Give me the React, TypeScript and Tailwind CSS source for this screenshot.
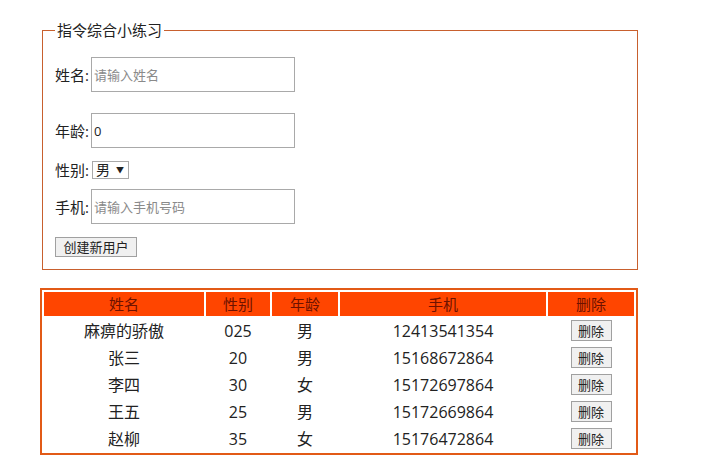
const users = [
  { name: "麻痹的骄傲", age: "025", sex: "男", phone: "12413541354" },
  { name: "张三", age: "20", sex: "男", phone: "15168672864" },
  { name: "李四", age: "30", sex: "女", phone: "15172697864" },
  { name: "王五", age: "25", sex: "男", phone: "15172669864" },
  { name: "赵柳", age: "35", sex: "女", phone: "15176472864" },
];

function Field({ label, children, className }: { label: string; children: React.ReactNode; className?: string }) {
  return (
    <div className={"flex items-center " + (className ?? "")}>
      <span className="w-[36px] text-[15px] leading-[20px] text-[#222]">{label}:</span>
      {children}
    </div>
  );
}

export default function App() {
  return (
    <div className="min-h-screen bg-white pl-[40px] pt-[20px] font-['Open_Sans','Noto_Sans_CJK_SC',sans-serif] text-[#222]">
      {/* form */}
      <fieldset className="ml-[2px] w-[596px] border border-[#c8602e] px-[12px] pb-[12px]">
        <legend className="px-[2px] text-[15px] leading-[20px] text-[#222]">指令综合小练习</legend>

        <Field label="姓名" className="mt-[17px]">
          <input
            className="h-[35px] w-[204px] border border-[#a9a9a9] px-[2px] text-[13px] outline-none placeholder:text-[#8a8a8a]"
            placeholder="请输入姓名"
          />
        </Field>

        <Field label="年龄" className="mt-[21px]">
          <input
            className="h-[35px] w-[204px] border border-[#a9a9a9] px-[2px] text-[13px] outline-none"
            defaultValue="0"
          />
        </Field>

        <Field label="性别" className="mt-[12px]">
          <div className="relative ml-[1px] flex">
            <select className="h-[18px] w-[37px] appearance-none border border-[#a9a9a9] bg-white pl-[3px] text-[14px] leading-[16px] outline-none">
              <option>男</option>
              <option>女</option>
            </select>
            <span className="pointer-events-none absolute right-[5px] top-0 flex h-[18px] items-center text-[8px]">▼</span>
          </div>
        </Field>

        <Field label="手机" className="mt-[9px]">
          <input
            className="h-[35px] w-[204px] border border-[#a9a9a9] px-[2px] text-[13px] outline-none placeholder:text-[#8a8a8a]"
            placeholder="请输入手机号码"
          />
        </Field>

        <button className="mt-[13px] block h-[20px] w-[82px] border border-[#a0a0a0] bg-[#f0f0f0] text-[13px] leading-[18px] text-[#222]">
          创建新用户
        </button>
      </fieldset>

      {/* user table */}
      <table className="mt-[18px] w-[598px] border-separate border-spacing-[2px] border-2 border-[#e25a17] text-[16px]">
        <thead>
          <tr className="h-[24px] bg-[#ff4500] text-[15px] text-[#6e1200]">
            <th className="w-[160px] p-0 font-normal">姓名</th>
            <th className="w-[64px] p-0 font-normal">性别</th>
            <th className="w-[66px] p-0 font-normal">年龄</th>
            <th className="w-[206px] p-0 font-normal">手机</th>
            <th className="w-[86px] p-0 font-normal">删除</th>
          </tr>
        </thead>
        <tbody>
          {users.map((u) => (
            <tr key={u.phone} className="h-[25px] text-center leading-[20px]">
              <td className="p-0">{u.name}</td>
              <td className="p-0">{u.age}</td>
              <td className="p-0">{u.sex}</td>
              <td className="p-0">{u.phone}</td>
              <td className="p-0">
                <button className="h-[21px] w-[41px] border border-[#a0a0a0] bg-[#f0f0f0] text-[13px] leading-[18px]">
                  删除
                </button>
              </td>
            </tr>
          ))}
        </tbody>
      </table>
    </div>
  );
}
